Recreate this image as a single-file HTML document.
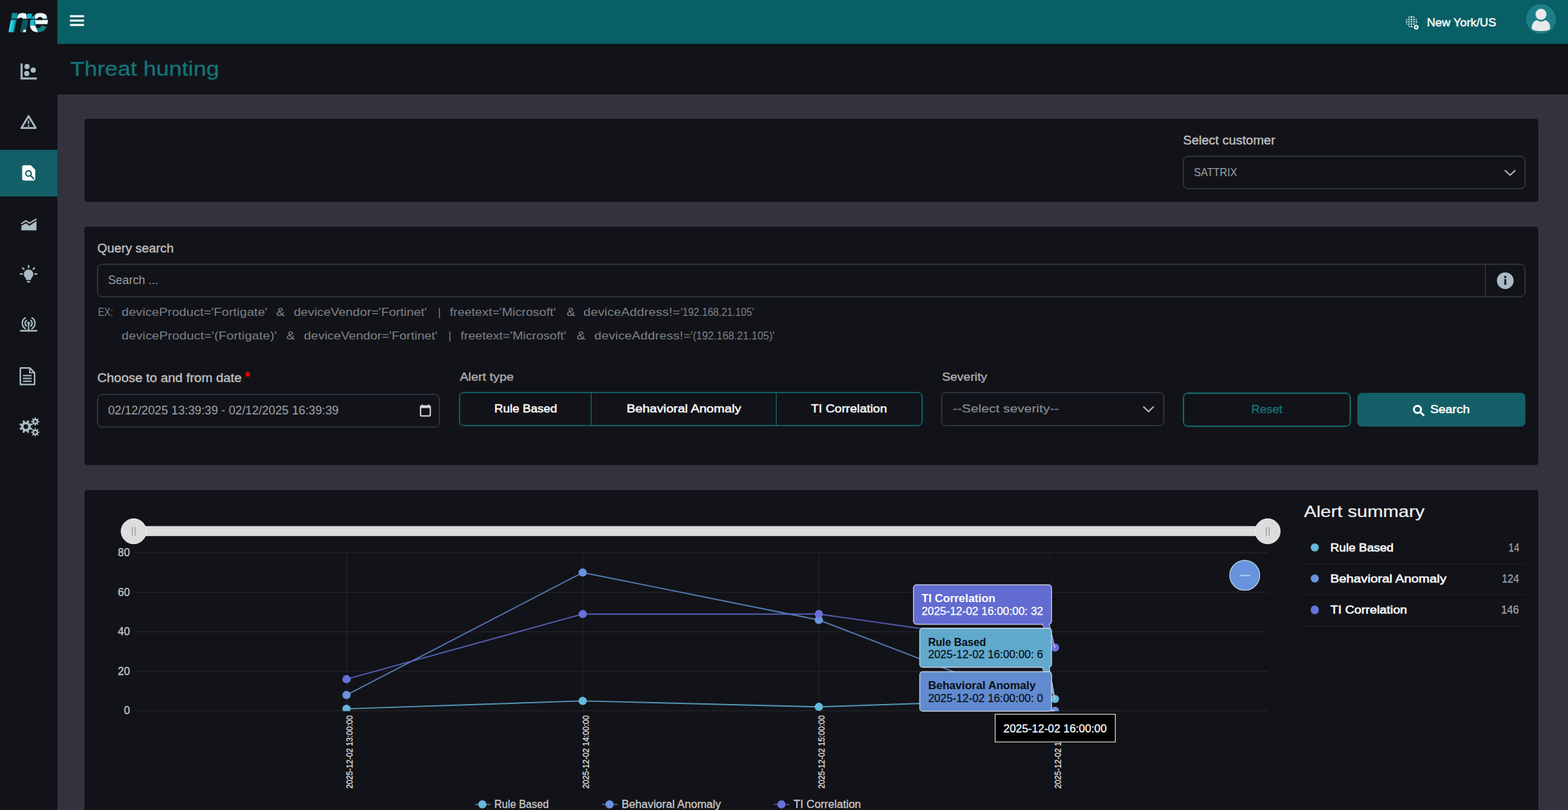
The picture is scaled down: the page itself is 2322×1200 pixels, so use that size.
<!DOCTYPE html>
<html lang="en"><head><meta charset="utf-8"><title>Threat hunting</title>
<style>
html,body{margin:0;padding:0}
body{width:2322px;height:1200px;overflow:hidden;position:relative;background:#32333e;font-family:"Liberation Sans", sans-serif;}
nav,header,main,section,h1,label,p{margin:0;padding:0;border:0;font-weight:400}
.a{position:absolute;box-sizing:border-box}
.t{position:absolute;white-space:pre;line-height:1;font-family:"Liberation Sans", sans-serif;display:block}
svg{position:absolute;overflow:visible}
svg text{font-family:"Liberation Sans", sans-serif;}
</style></head>
<body>
<nav aria-label="Sidebar">
<div class="a" style="left:0px;top:0px;width:85px;height:1200px;background:#121318;"></div>
<div class="a" style="left:0px;top:222px;width:85px;height:69px;background:#135f67;"></div>
<svg class="a" style="left:0;top:0" width="2322" height="1200" viewBox="0 0 2322 1200" aria-hidden="true"><defs><pattern id="lg" patternUnits="userSpaceOnUse" x="0" y="0" width="90" height="60">
<rect x="0" y="0" width="90" height="60" fill="#0e808b"/>
<polygon points="13,29 22.5,29 19,49 9,49" fill="#17bdd0"/>
<polygon points="15.5,31 19,31 16,47 12.5,47" fill="#2fd6e6"/>
<rect x="14" y="18" width="13" height="10" fill="#0f8e99"/>
<polygon points="28,18 38,18 40,28 25.5,28" fill="#f2fdfd"/>
<polygon points="33,29 43,29 40,49 30,49" fill="#0a5863"/>
<polygon points="35,44 39,44 38,49 33.5,49" fill="#d9f3f5"/>
<rect x="40" y="18" width="5" height="10" fill="#0b6670"/>
<polygon points="45,18 51,18 49.5,28 44,28" fill="#19c4d8"/>
<polygon points="53.5,18 68,18 70,28 51,28" fill="#f0fbfc"/>
<rect x="69" y="18" width="6" height="10" fill="#0f7f89"/>
<polygon points="43,29 51,29 50,38 42,38" fill="#18c0d4"/>
<polygon points="42,38 52,38 57,50 43,50" fill="#f1fbfb"/>
<polygon points="52,29.5 73,29.5 72,37.6 53,37.6" fill="#eafafb"/>
<polygon points="56,40 72,40 70,50 57,50" fill="#0f7e88"/>
</pattern></defs>
<text x="12.6" y="47.4" font-size="50" font-weight="700" font-style="italic" textLength="59" lengthAdjust="spacingAndGlyphs" fill="url(#lg)" stroke="url(#lg)" stroke-width="1.4" stroke-linejoin="round">ne</text>
<polygon points="40.6,20.3 47.6,20.3 46.2,27.7 39.4,27.7" fill="#16b4c7"/>
<rect x="12" y="27.7" width="62" height="1.5" fill="#121318"/>
<path d="M30.5,94 h3 v20.8 h21 v3 h-24z" fill="#a9bcc4"/>
<circle cx="40.0" cy="98.6" r="3.9" fill="#a9bcc4"/>
<circle cx="49.2" cy="103.8" r="3.9" fill="#a9bcc4"/>
<circle cx="39.6" cy="108.8" r="3.9" fill="#a9bcc4"/>
<path d="M42.3,172 L53,189.7 L31.6,189.7Z" fill="none" stroke="#a9bcc4" stroke-width="2.7" stroke-linejoin="round"/>
<rect x="41.3" y="178.3" width="2" height="5.6" rx="0.8" fill="#a9bcc4"/><circle cx="42.3" cy="186.3" r="1.2" fill="#a9bcc4"/>
<path d="M35.2,244.8 h10.4 l6.6,6.6 v13.6 a2.4,2.4 0 0 1 -2.4,2.4 h-14.6 a2.4,2.4 0 0 1 -2.4,-2.4 v-17.8 a2.4,2.4 0 0 1 2.4,-2.4z" fill="#ffffff"/>
<circle cx="42.2" cy="257" r="4" fill="none" stroke="#135f67" stroke-width="2"/><path d="M45.2,260.1 L49.8,264.8" stroke="#135f67" stroke-width="2.2" stroke-linecap="round"/>
<path d="M31.6,341.2 V334.6 L38.4,330.8 L43.6,334.4 L54,327.4 V341.2Z" fill="#a9bcc4"/>
<path d="M32,331.2 L38.4,327.2 L43.6,330.6 L53.4,324.8" fill="none" stroke="#a9bcc4" stroke-width="2" stroke-linecap="round" stroke-linejoin="round"/>
<path d="M42.3,399.2 a7,7 0 0 1 7,7 c0,2.6 -1.6,4.2 -2.6,5.6 c-0.6,0.9 -0.8,1.7 -0.9,2.9 h-7 c-0.1,-1.2 -0.3,-2 -0.9,-2.9 c-1,-1.4 -2.6,-3 -2.6,-5.6 a7,7 0 0 1 7,-7z" fill="#a9bcc4"/>
<rect x="39.8" y="416.2" width="5" height="2.4" rx="1" fill="#a9bcc4"/>
<path d="M42.3,393.6 L42.3,396.2" stroke="#a9bcc4" stroke-width="2.2" stroke-linecap="round"/>
<path d="M30.2,405.8 L33,405.8" stroke="#a9bcc4" stroke-width="2.2" stroke-linecap="round"/>
<path d="M51.6,405.8 L54.4,405.8" stroke="#a9bcc4" stroke-width="2.2" stroke-linecap="round"/>
<path d="M33.6,397 L35.4,398.8" stroke="#a9bcc4" stroke-width="2.2" stroke-linecap="round"/>
<path d="M51,397 L49.2,398.8" stroke="#a9bcc4" stroke-width="2.2" stroke-linecap="round"/>
<circle cx="42.4" cy="478.8" r="2.2" fill="#a9bcc4"/>
<path d="M39.20,474.70 A5.2,5.2 0 0 0 39.20,482.90" fill="none" stroke="#a9bcc4" stroke-width="2.2" stroke-linecap="round"/>
<path d="M45.60,474.70 A5.2,5.2 0 0 1 45.60,482.90" fill="none" stroke="#a9bcc4" stroke-width="2.2" stroke-linecap="round"/>
<path d="M37.42,470.83 A9.4,9.4 0 0 0 37.42,486.77" fill="none" stroke="#a9bcc4" stroke-width="2.2" stroke-linecap="round"/>
<path d="M47.38,470.83 A9.4,9.4 0 0 1 47.38,486.77" fill="none" stroke="#a9bcc4" stroke-width="2.2" stroke-linecap="round"/>
<path d="M42.4,480.8 V489" stroke="#a9bcc4" stroke-width="2"/>
<path d="M30.6,490 H54.2" stroke="#a9bcc4" stroke-width="2.4" stroke-linecap="round"/>
<path d="M38.6,490 q3.8,-3.4 7.6,0z" fill="#a9bcc4"/>
<path d="M30.1,545.1 h14 l7.1,7.1 v17.4 h-21.1z" fill="none" stroke="#a9bcc4" stroke-width="2.2" stroke-linejoin="round"/>
<path d="M44.1,545.1 v7.1 h7.1" fill="none" stroke="#a9bcc4" stroke-width="1.8" stroke-linejoin="round"/>
<rect x="34" y="555.4" width="12.8" height="2" fill="#a9bcc4"/>
<rect x="34" y="559.6" width="12.8" height="2" fill="#a9bcc4"/>
<rect x="34" y="563.8" width="12.8" height="2" fill="#a9bcc4"/>
<path d="M45.39,633.27 L47.91,634.39 L46.78,637.11 L44.21,636.12 L42.42,637.91 L43.41,640.48 L40.69,641.61 L39.57,639.09 L37.03,639.09 L35.91,641.61 L33.19,640.48 L34.18,637.91 L32.39,636.12 L29.82,637.11 L28.69,634.39 L31.21,633.27 L31.21,630.73 L28.69,629.61 L29.82,626.89 L32.39,627.88 L34.18,626.09 L33.19,623.52 L35.91,622.39 L37.03,624.91 L39.57,624.91 L40.69,622.39 L43.41,623.52 L42.42,626.09 L44.21,627.88 L46.78,626.89 L47.91,629.61 L45.39,630.73Z M34.90,632.00 a3.4,3.4 0 1,0 6.8,0 a3.4,3.4 0 1,0 -6.8,0Z" fill="#a9bcc4" fill-rule="evenodd"/>
<path d="M56.40,623.68 L58.33,623.68 L58.33,625.52 L56.40,625.52 L55.82,626.92 L57.19,628.28 L55.88,629.59 L54.52,628.22 L53.12,628.80 L53.12,630.73 L51.28,630.73 L51.28,628.80 L49.88,628.22 L48.52,629.59 L47.21,628.28 L48.58,626.92 L48.00,625.52 L46.07,625.52 L46.07,623.68 L48.00,623.68 L48.58,622.28 L47.21,620.92 L48.52,619.61 L49.88,620.98 L51.28,620.40 L51.28,618.47 L53.12,618.47 L53.12,620.40 L54.52,620.98 L55.88,619.61 L57.19,620.92 L55.82,622.28Z M50.30,624.60 a1.9,1.9 0 1,0 3.8,0 a1.9,1.9 0 1,0 -3.8,0Z" fill="#a9bcc4" fill-rule="evenodd"/>
<path d="M56.40,639.48 L58.33,639.48 L58.33,641.32 L56.40,641.32 L55.82,642.72 L57.19,644.08 L55.88,645.39 L54.52,644.02 L53.12,644.60 L53.12,646.53 L51.28,646.53 L51.28,644.60 L49.88,644.02 L48.52,645.39 L47.21,644.08 L48.58,642.72 L48.00,641.32 L46.07,641.32 L46.07,639.48 L48.00,639.48 L48.58,638.08 L47.21,636.72 L48.52,635.41 L49.88,636.78 L51.28,636.20 L51.28,634.27 L53.12,634.27 L53.12,636.20 L54.52,636.78 L55.88,635.41 L57.19,636.72 L55.82,638.08Z M50.30,640.40 a1.9,1.9 0 1,0 3.8,0 a1.9,1.9 0 1,0 -3.8,0Z" fill="#a9bcc4" fill-rule="evenodd"/></svg>
</nav>
<header>
<div class="a" style="left:85px;top:0px;width:2237px;height:65px;background:#085f65;"></div>
<svg class="a" style="left:0;top:0" width="2322" height="1200" viewBox="0 0 2322 1200" aria-hidden="true"><rect x="103.5" y="22.5" width="21" height="3" rx="0.6" fill="#ffffff"/>
<rect x="103.5" y="29" width="21" height="3" rx="0.6" fill="#ffffff"/>
<rect x="103.5" y="35.5" width="21" height="3" rx="0.6" fill="#ffffff"/>
<circle cx="2090.2" cy="32.2" r="8.4" fill="#eef6f6"/>
<path d="M2084.6,23.800000000000004 V40.6" stroke="#085f65" stroke-width="1.5"/>
<path d="M2088.2,23.800000000000004 V40.6" stroke="#085f65" stroke-width="1.5"/>
<path d="M2092.2,23.800000000000004 V40.6" stroke="#085f65" stroke-width="1.5"/>
<path d="M2095.7999999999997,23.800000000000004 V40.6" stroke="#085f65" stroke-width="1.5"/>
<path d="M2081.7999999999997,27.200000000000003 H2098.6" stroke="#085f65" stroke-width="1.5"/>
<path d="M2081.7999999999997,30.6 H2098.6" stroke="#085f65" stroke-width="1.5"/>
<path d="M2081.7999999999997,34.0 H2098.6" stroke="#085f65" stroke-width="1.5"/>
<path d="M2081.7999999999997,37.400000000000006 H2098.6" stroke="#085f65" stroke-width="1.5"/>
<circle cx="2097.2" cy="40.2" r="4.6" fill="#085f65"/><circle cx="2097.2" cy="40.2" r="3.5" fill="#f4f8f8"/><circle cx="2097.2" cy="40.2" r="1.3" fill="#085f65"/>
<circle cx="2282" cy="28.2" r="22" fill="#1c7f87"/>
<circle cx="2282" cy="21.2" r="8.1" fill="#e9e9e9"/>
<path d="M2268.3,41.6 c0,-7.2 4.2,-11.6 8.2,-11.6 c1.6,1.2 3.4,1.9 5.5,1.9 s3.9,-0.7 5.5,-1.9 c4,0 8.2,4.4 8.2,11.6 c0,1.4 -1,2.3 -2.4,2.8 c-3.4,1.2 -7.4,1.7 -11.3,1.7 s-7.9,-0.5 -11.3,-1.7 c-1.4,-0.5 -2.4,-1.4 -2.4,-2.8z" fill="#e9e9e9"/></svg>
<span class="t" style="left:2113.00px;top:24.63px;font-size:16.5px;color:#ffffff;transform:scaleX(1.0543);transform-origin:0 0;-webkit-text-stroke:0.45px #ffffff;">New York/US</span>
</header>
<main>
<div>
<div class="a" style="left:85px;top:65px;width:2237px;height:75px;background:#121318;"></div>
<h1 class="t" style="left:104.00px;top:86.51px;font-size:30px;color:#15747b;transform:scaleX(1.1397);transform-origin:0 0;-webkit-text-stroke:0.3px #15747b;">Threat hunting</h1>
</div>
<section aria-label="Customer">
<div class="a" style="left:125px;top:176px;width:2153px;height:123px;background:#121318;border-radius:4px;"></div>
<div class="a" style="left:1752px;top:231px;width:507px;height:49px;border:1px solid #373d4c;border-radius:7px;box-shadow:0 0 0 .5px rgba(55,61,76,.5),inset 0 0 0 .5px rgba(55,61,76,.5);"></div>
<svg class="a" style="left:0;top:0" width="2322" height="1200" viewBox="0 0 2322 1200" aria-hidden="true"><path d="M2229,252.8 L2236.2,259.6 L2243.4,252.8" fill="none" stroke="#b3b7bb" stroke-width="2" stroke-linecap="round" stroke-linejoin="round"/></svg>
<label class="t" style="left:1752.00px;top:198.96px;font-size:18px;color:#c0c0c0;transform:scaleX(1.0576);transform-origin:0 0;-webkit-text-stroke:0.35px #c0c0c0;">Select customer</label>
<span class="t" style="left:1768.00px;top:246.81px;font-size:17px;color:#9ca1a6;transform:scaleX(0.9074);transform-origin:0 0;">SATTRIX</span>
</section>
<section aria-label="Query">
<div class="a" style="left:125px;top:336px;width:2153px;height:353px;background:#121318;border-radius:4px;"></div>
<div class="a" style="left:144px;top:391px;width:2115px;height:49px;border:1px solid #373d4c;border-radius:7px;box-shadow:0 0 0 .5px rgba(55,61,76,.5),inset 0 0 0 .5px rgba(55,61,76,.5);"></div>
<div class="a" style="left:2199px;top:391px;width:1px;height:49px;background:#373d4c;"></div>
<div class="a" style="left:144px;top:584px;width:507px;height:49px;border:1px solid #373d4c;border-radius:7px;box-shadow:0 0 0 .5px rgba(55,61,76,.5),inset 0 0 0 .5px rgba(55,61,76,.5);"></div>
<div class="a" style="left:680px;top:581px;width:686px;height:50px;border:1px solid #14767d;border-radius:7px;box-shadow:0 0 0 .5px rgba(20,118,125,.5),inset 0 0 0 .5px rgba(20,118,125,.5);"></div>
<div class="a" style="left:875px;top:581px;width:1px;height:50px;background:#14767d;"></div>
<div class="a" style="left:1149px;top:581px;width:1px;height:50px;background:#14767d;"></div>
<div class="a" style="left:1394px;top:581px;width:330px;height:50px;border:1px solid #373d4c;border-radius:7px;box-shadow:0 0 0 .5px rgba(55,61,76,.5),inset 0 0 0 .5px rgba(55,61,76,.5);"></div>
<div class="a" style="left:1752px;top:582px;width:248px;height:50px;border:1px solid #14767d;border-radius:7px;box-shadow:0 0 0 .5px rgba(20,118,125,.8),inset 0 0 0 .5px rgba(20,118,125,.8);"></div>
<div class="a" style="left:2010px;top:582px;width:249px;height:50px;background:#145f67;border-radius:7px;"></div>
<svg class="a" style="left:0;top:0" width="2322" height="1200" viewBox="0 0 2322 1200" aria-hidden="true"><path d="M1693.6,602.8 L1700.8,609.8 L1708,602.8" fill="none" stroke="#b3b7bb" stroke-width="2" stroke-linecap="round" stroke-linejoin="round"/>
<circle cx="2229.1" cy="415.8" r="12.4" fill="#a9bcc4"/>
<circle cx="2229.1" cy="410.2" r="1.7" fill="#121318"/><rect x="2227.7" y="413.4" width="2.8" height="8.6" fill="#121318"/>
<rect x="622.8" y="601.6" width="14.4" height="14.6" rx="1.6" fill="none" stroke="#d6d6d6" stroke-width="2"/>
<rect x="622" y="600.8" width="16" height="3.6" rx="1" fill="#d6d6d6"/>
<rect x="624.6" y="599.2" width="1.8" height="3" fill="#d6d6d6"/><rect x="633.6" y="599.2" width="1.8" height="3" fill="#d6d6d6"/>
<circle cx="2099.1" cy="606.5" r="5.3" fill="none" stroke="#ffffff" stroke-width="2.9"/>
<path d="M2103.4,610.8 L2108.1,615.1" stroke="#ffffff" stroke-width="2.9" stroke-linecap="round"/></svg>
<label class="t" style="left:144.30px;top:358.56px;font-size:18px;color:#c0c0c0;transform:scaleX(1.0477);transform-origin:0 0;-webkit-text-stroke:0.35px #c0c0c0;">Query search</label>
<span class="t" style="left:159.70px;top:405.76px;font-size:18px;color:#969ca2;transform:scaleX(0.9643);transform-origin:0 0;">Search ...</span>
<span class="t" style="left:144.50px;top:453.72px;font-size:16.4px;color:#7c8187;transform:scaleX(0.8516);transform-origin:0 0;">EX:</span>
<span class="t" style="left:180.30px;top:453.72px;font-size:16.4px;color:#7c8187;letter-spacing:0.076px;transform:scaleX(1.1600);transform-origin:0 0;">deviceProduct='Fortigate'</span>
<span class="t" style="left:408.60px;top:453.72px;font-size:16.4px;color:#7c8187;transform:scaleX(1.18);transform-origin:0 0;">&amp;</span>
<span class="t" style="left:435.30px;top:453.72px;font-size:16.4px;color:#7c8187;transform:scaleX(1.1550);transform-origin:0 0;">deviceVendor='Fortinet'</span>
<span class="t" style="left:648.50px;top:453.72px;font-size:16.4px;color:#7c8187;">|</span>
<span class="t" style="left:666.10px;top:453.72px;font-size:16.4px;color:#7c8187;transform:scaleX(1.1461);transform-origin:0 0;">freetext='Microsoft'</span>
<span class="t" style="left:838.60px;top:453.72px;font-size:16.4px;color:#7c8187;transform:scaleX(1.18);transform-origin:0 0;">&amp;</span>
<span class="t" style="left:864.40px;top:453.72px;font-size:16.4px;color:#7c8187;letter-spacing:0.117px;transform:scaleX(1.1600);transform-origin:0 0;">deviceAddress!=</span>
<span class="t" style="left:1007.60px;top:453.72px;font-size:16.4px;color:#7c8187;transform:scaleX(0.9035);transform-origin:0 0;">'192.168.21.105'</span>
<span class="t" style="left:180.30px;top:488.92px;font-size:16.4px;color:#7c8187;letter-spacing:0.115px;transform:scaleX(1.1600);transform-origin:0 0;">deviceProduct='(Fortigate)'</span>
<span class="t" style="left:424.00px;top:488.92px;font-size:16.4px;color:#7c8187;transform:scaleX(1.18);transform-origin:0 0;">&amp;</span>
<span class="t" style="left:450.00px;top:488.92px;font-size:16.4px;color:#7c8187;transform:scaleX(1.1597);transform-origin:0 0;">deviceVendor='Fortinet'</span>
<span class="t" style="left:664.00px;top:488.92px;font-size:16.4px;color:#7c8187;">|</span>
<span class="t" style="left:681.60px;top:488.92px;font-size:16.4px;color:#7c8187;transform:scaleX(1.1425);transform-origin:0 0;">freetext='Microsoft'</span>
<span class="t" style="left:854.00px;top:488.92px;font-size:16.4px;color:#7c8187;transform:scaleX(1.18);transform-origin:0 0;">&amp;</span>
<span class="t" style="left:880.00px;top:488.92px;font-size:16.4px;color:#7c8187;letter-spacing:0.117px;transform:scaleX(1.1600);transform-origin:0 0;">deviceAddress!=</span>
<span class="t" style="left:1023.20px;top:488.92px;font-size:16.4px;color:#7c8187;transform:scaleX(0.9458);transform-origin:0 0;">'(192.168.21.105)'</span>
<label class="t" style="left:144.30px;top:550.76px;font-size:18px;color:#c0c0c0;transform:scaleX(1.0791);transform-origin:0 0;-webkit-text-stroke:0.35px #c0c0c0;">Choose to and from date</label>
<span class="t" style="left:363.00px;top:550.09px;font-size:17.5px;color:#ff0000;font-weight:700;-webkit-text-stroke:0.5px #ff0000;">*</span>
<span class="t" style="left:159.70px;top:599.46px;font-size:18px;color:#9ca1a6;transform:scaleX(0.9861);transform-origin:0 0;">02/12/2025 13:39:39 - 02/12/2025 16:39:39</span>
<label class="t" style="left:680.50px;top:549.87px;font-size:17.4px;color:#b0b0b0;transform:scaleX(1.0862);transform-origin:0 0;-webkit-text-stroke:0.35px #b0b0b0;">Alert type</label>
<span class="t" style="left:732.00px;top:597.24px;font-size:17.2px;color:#ffffff;transform:scaleX(1.0466);transform-origin:0 0;-webkit-text-stroke:0.45px #ffffff;">Rule Based</span>
<span class="t" style="left:928.10px;top:597.24px;font-size:17.2px;color:#ffffff;transform:scaleX(1.1157);transform-origin:0 0;-webkit-text-stroke:0.45px #ffffff;">Behavioral Anomaly</span>
<span class="t" style="left:1200.60px;top:597.24px;font-size:17.2px;color:#ffffff;transform:scaleX(1.0804);transform-origin:0 0;-webkit-text-stroke:0.45px #ffffff;">TI Correlation</span>
<label class="t" style="left:1394.70px;top:549.87px;font-size:17.4px;color:#b0b0b0;transform:scaleX(1.0632);transform-origin:0 0;-webkit-text-stroke:0.35px #b0b0b0;">Severity</label>
<span class="t" style="left:1411.00px;top:597.46px;font-size:17.3px;color:#878f96;transform:scaleX(1.1596);transform-origin:0 0;-webkit-text-stroke:0.15px #878f96;">--Select severity--</span>
<span class="t" style="left:1853.30px;top:598.36px;font-size:17.3px;color:#14747b;transform:scaleX(1.0187);transform-origin:0 0;-webkit-text-stroke:0.4px #14747b;">Reset</span>
<span class="t" style="left:2118.20px;top:598.36px;font-size:17.3px;color:#ffffff;transform:scaleX(1.0682);transform-origin:0 0;-webkit-text-stroke:0.5px #ffffff;">Search</span>
</section>
<section aria-label="Alerts">
<div class="a" style="left:125px;top:726px;width:2153px;height:500px;background:#121318;border-radius:4px;"></div>
<div class="a" style="left:1940.7px;top:804.7px;width:12.6px;height:12.6px;background:#67b7dc;border-radius:50%;"></div>
<div class="a" style="left:1940.7px;top:850.7px;width:12.6px;height:12.6px;background:#6794dc;border-radius:50%;"></div>
<div class="a" style="left:1940.7px;top:897.0px;width:12.6px;height:12.6px;background:#6771dc;border-radius:50%;"></div>
<div class="a" style="left:1931px;top:834.5px;width:329px;height:1px;background:#1d1f26;"></div>
<div class="a" style="left:1931px;top:880px;width:329px;height:1px;background:#1d1f26;"></div>
<div class="a" style="left:1931px;top:927px;width:329px;height:1px;background:#1d1f26;"></div>
<span class="t" style="left:1931.00px;top:746.48px;font-size:24px;color:#f2f2f2;transform:scaleX(1.1539);transform-origin:0 0;-webkit-text-stroke:0.2px #f2f2f2;">Alert summary</span>
<span class="t" style="left:1969.50px;top:802.61px;font-size:17px;color:#ffffff;transform:scaleX(1.0661);transform-origin:0 0;-webkit-text-stroke:0.55px #ffffff;">Rule Based</span>
<span class="t" style="left:2233.80px;top:802.61px;font-size:17px;color:#a3a7ab;transform:scaleX(0.8350);transform-origin:0 0;-webkit-text-stroke:0.25px #a3a7ab;">14</span>
<span class="t" style="left:1969.50px;top:849.01px;font-size:17px;color:#ffffff;transform:scaleX(1.1440);transform-origin:0 0;-webkit-text-stroke:0.55px #ffffff;">Behavioral Anomaly</span>
<span class="t" style="left:2224.20px;top:849.01px;font-size:17px;color:#a3a7ab;transform:scaleX(0.8952);transform-origin:0 0;-webkit-text-stroke:0.25px #a3a7ab;">124</span>
<span class="t" style="left:1969.50px;top:895.01px;font-size:17px;color:#ffffff;transform:scaleX(1.1050);transform-origin:0 0;-webkit-text-stroke:0.55px #ffffff;">TI Correlation</span>
<span class="t" style="left:2223.30px;top:895.01px;font-size:17px;color:#a3a7ab;transform:scaleX(0.9269);transform-origin:0 0;-webkit-text-stroke:0.25px #a3a7ab;">146</span>
<svg class="a" style="left:0;top:0" width="2322" height="1200" viewBox="0 0 2322 1200" role="img" aria-label="Alerts over time"><defs><clipPath id="plot"><rect x="199" y="800" width="1690" height="253.6"/></clipPath></defs>
<rect x="198" y="779.4" width="1679.3" height="14.8" fill="#dcdcdc"/>
<circle cx="198.0" cy="787.1" r="18.6" fill="#dddddd" stroke="#f0f0f0" stroke-width="1"/>
<path d="M195.9,780.6 V793.6 M200.1,780.6 V793.6" stroke="#8e8e8e" stroke-width="1.1"/>
<circle cx="1877.3" cy="787.1" r="18.6" fill="#dddddd" stroke="#f0f0f0" stroke-width="1"/>
<path d="M1875.2,780.6 V793.6 M1879.3999999999999,780.6 V793.6" stroke="#8e8e8e" stroke-width="1.1"/>
<path d="M199.5,1053.0 H1877.5" stroke="rgba(255,255,255,0.068)" stroke-width="1.4"/>
<text x="192.3" y="1058.1" font-size="16" text-anchor="end" fill="#c9c9c9" stroke="#c9c9c9" stroke-width="0.3">0</text>
<path d="M199.5,994.5 H1877.5" stroke="rgba(255,255,255,0.068)" stroke-width="1.4"/>
<text x="192.3" y="999.6" font-size="16" text-anchor="end" fill="#c9c9c9" stroke="#c9c9c9" stroke-width="0.3">20</text>
<path d="M199.5,936.0 H1877.5" stroke="rgba(255,255,255,0.068)" stroke-width="1.4"/>
<text x="192.3" y="941.1" font-size="16" text-anchor="end" fill="#c9c9c9" stroke="#c9c9c9" stroke-width="0.3">40</text>
<path d="M199.5,877.5 H1877.5" stroke="rgba(255,255,255,0.068)" stroke-width="1.4"/>
<text x="192.3" y="882.6" font-size="16" text-anchor="end" fill="#c9c9c9" stroke="#c9c9c9" stroke-width="0.3">60</text>
<path d="M199.5,819.0 H1877.5" stroke="rgba(255,255,255,0.068)" stroke-width="1.4"/>
<text x="192.3" y="824.1" font-size="16" text-anchor="end" fill="#c9c9c9" stroke="#c9c9c9" stroke-width="0.3">80</text>
<path d="M513.7,819 V1053" stroke="rgba(255,255,255,0.068)" stroke-width="1.4"/>
<path d="M863.4,819 V1053" stroke="rgba(255,255,255,0.068)" stroke-width="1.4"/>
<path d="M1213.1,819 V1053" stroke="rgba(255,255,255,0.068)" stroke-width="1.4"/>
<path d="M1562.3,819 V1053" stroke="#08090c" stroke-width="1.6" stroke-dasharray="3 3" stroke-opacity="0.6"/>
<g clip-path="url(#plot)"><polyline points="513.2,1050.1 862.9,1038.4 1212.6,1047.2 1562.3,1035.5" fill="none" stroke="#67b7dc" stroke-width="1.9" stroke-opacity="0.78"/><polyline points="513.2,1029.6 862.9,848.2 1212.6,918.5 1562.3,1053.0" fill="none" stroke="#6794dc" stroke-width="1.9" stroke-opacity="0.78"/><polyline points="513.2,1006.2 862.9,909.7 1212.6,909.7 1562.3,959.4" fill="none" stroke="#6771dc" stroke-width="1.9" stroke-opacity="0.78"/><circle cx="513.2" cy="1050.1" r="6.1" fill="#67b7dc"/><circle cx="862.9" cy="1038.4" r="6.1" fill="#67b7dc"/><circle cx="1212.6" cy="1047.2" r="6.1" fill="#67b7dc"/><circle cx="1562.3" cy="1035.5" r="6.1" fill="#67b7dc"/><circle cx="513.2" cy="1029.6" r="6.1" fill="#6794dc"/><circle cx="862.9" cy="848.2" r="6.1" fill="#6794dc"/><circle cx="1212.6" cy="918.5" r="6.1" fill="#6794dc"/><circle cx="1562.3" cy="1053.0" r="6.1" fill="#6794dc"/><circle cx="513.2" cy="1006.2" r="6.1" fill="#6771dc"/><circle cx="862.9" cy="909.7" r="6.1" fill="#6771dc"/><circle cx="1212.6" cy="909.7" r="6.1" fill="#6771dc"/><circle cx="1562.3" cy="959.4" r="6.1" fill="#6771dc"/></g>
<circle cx="1843.3" cy="852.3" r="22.2" fill="#6794dc" stroke="#c6d6f1" stroke-width="1.2"/>
<path d="M1836,852.7 H1851.6" stroke="#b9d0f4" stroke-width="1.8"/>
<text transform="translate(522.0,1168.2) rotate(-90)" font-size="13.6" textLength="108.5" lengthAdjust="spacingAndGlyphs" fill="#e2e2e2" stroke="#e2e2e2" stroke-width="0.25">2025-12-02 13:00:00</text>
<text transform="translate(871.7,1168.2) rotate(-90)" font-size="13.6" textLength="108.5" lengthAdjust="spacingAndGlyphs" fill="#e2e2e2" stroke="#e2e2e2" stroke-width="0.25">2025-12-02 14:00:00</text>
<text transform="translate(1221.4,1168.2) rotate(-90)" font-size="13.6" textLength="108.5" lengthAdjust="spacingAndGlyphs" fill="#e2e2e2" stroke="#e2e2e2" stroke-width="0.25">2025-12-02 15:00:00</text>
<text transform="translate(1571.1,1168.2) rotate(-90)" font-size="13.6" textLength="108.5" lengthAdjust="spacingAndGlyphs" fill="#e2e2e2" stroke="#e2e2e2" stroke-width="0.25">2025-12-02 16:00:00</text>
<path d="M703.3,1191.7 H726.3" stroke="#67b7dc" stroke-width="1.6" stroke-opacity="0.7"/>
<circle cx="714.3" cy="1191.7" r="6.1" fill="#67b7dc"/>
<text x="732.1" y="1197.3" font-size="16" textLength="80.5" lengthAdjust="spacingAndGlyphs" fill="#c9c9c9" stroke="#c9c9c9" stroke-width="0.3">Rule Based</text>
<path d="M891.7,1191.7 H914.7" stroke="#6794dc" stroke-width="1.6" stroke-opacity="0.7"/>
<circle cx="902.7" cy="1191.7" r="6.1" fill="#6794dc"/>
<text x="920.5" y="1197.3" font-size="16" textLength="147.0" lengthAdjust="spacingAndGlyphs" fill="#c9c9c9" stroke="#c9c9c9" stroke-width="0.3">Behavioral Anomaly</text>
<path d="M1146.2,1191.7 H1169.2" stroke="#6771dc" stroke-width="1.6" stroke-opacity="0.7"/>
<circle cx="1157.2" cy="1191.7" r="6.1" fill="#6771dc"/>
<text x="1175.0" y="1197.3" font-size="16" textLength="100.0" lengthAdjust="spacingAndGlyphs" fill="#c9c9c9" stroke="#c9c9c9" stroke-width="0.3">TI Correlation</text>
<path d="M1543.2,924.3 L1562.3,959.4 L1553.7,924.3Z" fill="#626bd0" stroke="#d5dbea" stroke-width="1" stroke-linejoin="round"/><rect x="1352.8" y="866.3" width="204.4" height="58.5" rx="4.5" fill="#626bd0" stroke="#d5dbea" stroke-width="1.2"/><path d="M1544.0,923.5999999999999 L1561.7,957.9 L1553.0,923.5999999999999Z" fill="#626bd0"/><text x="1364.7" y="891.6" font-size="16.6" font-weight="700" textLength="109.4" lengthAdjust="spacingAndGlyphs" fill="#ffffff">TI Correlation</text><text x="1364.7" y="911.3" font-size="16.6" textLength="180" lengthAdjust="spacingAndGlyphs" fill="#ffffff" stroke="#ffffff" stroke-width="0.25">2025-12-02 16:00:00: 32</text>
<path d="M1543.2,988.2 L1562.3,1035.5 L1553.7,988.2Z" fill="#60a9cd" stroke="#d5dbea" stroke-width="1" stroke-linejoin="round"/><rect x="1362.0" y="930.6" width="195.2" height="58.1" rx="4.5" fill="#60a9cd" stroke="#d5dbea" stroke-width="1.2"/><path d="M1544.0,987.5 L1561.7,1034.0 L1553.0,987.5Z" fill="#60a9cd"/><text x="1374.4" y="956.6" font-size="16.6" font-weight="700" textLength="85.6" lengthAdjust="spacingAndGlyphs" fill="#0b0f14">Rule Based</text><text x="1374.4" y="975.3" font-size="16.6" textLength="170.2" lengthAdjust="spacingAndGlyphs" fill="#0b0f14" stroke="#0b0f14" stroke-width="0.25">2025-12-02 16:00:00: 6</text>
<path d="M1543.2,1053.2 L1562.3,1053.0 L1553.7,1053.2Z" fill="#618bd0" stroke="#d5dbea" stroke-width="1" stroke-linejoin="round"/><rect x="1362.0" y="995.2" width="195.2" height="58.5" rx="4.5" fill="#618bd0" stroke="#d5dbea" stroke-width="1.2"/><path d="M1544.0,1052.5 L1561.7,1051.5 L1553.0,1052.5Z" fill="#618bd0"/><text x="1374.4" y="1021.2" font-size="16.6" font-weight="700" textLength="159.3" lengthAdjust="spacingAndGlyphs" fill="#0b0f14">Behavioral Anomaly</text><text x="1374.4" y="1039.6" font-size="16.6" textLength="170.2" lengthAdjust="spacingAndGlyphs" fill="#0b0f14" stroke="#0b0f14" stroke-width="0.25">2025-12-02 16:00:00: 0</text>
<rect x="1473.6" y="1058.2" width="178" height="41" fill="#000000" stroke="#d9d9d9" stroke-width="1.2"/>
<text x="1486" y="1085.2" font-size="16.8" textLength="152.8" lengthAdjust="spacingAndGlyphs" fill="#ffffff" stroke="#ffffff" stroke-width="0.25">2025-12-02 16:00:00</text></svg>
</section>
</main>
</body></html>
